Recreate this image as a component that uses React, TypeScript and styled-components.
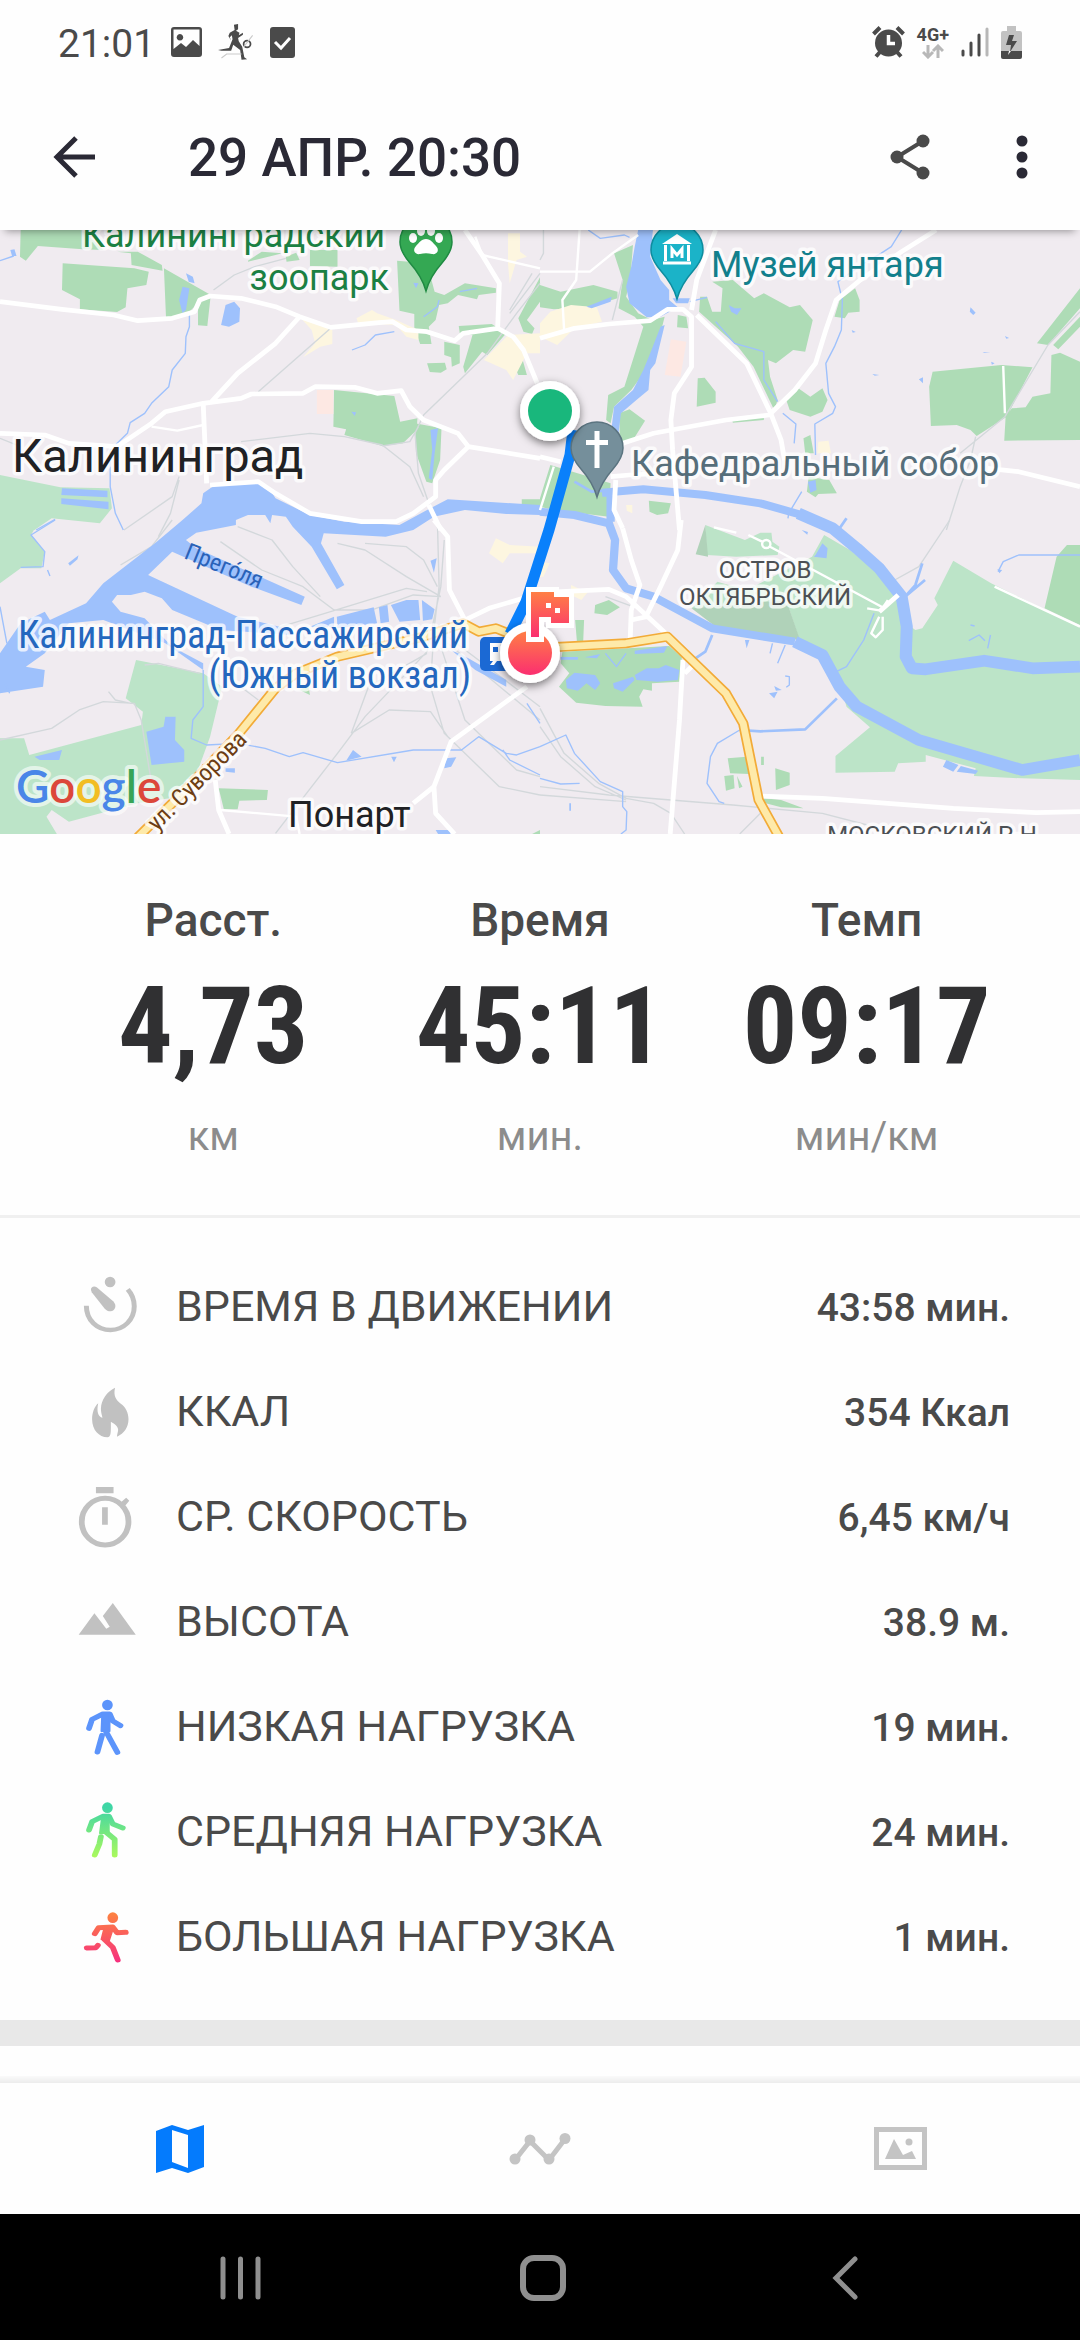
import React from "react";
import styled, { createGlobalStyle } from "styled-components";

const Global = createGlobalStyle`
  *, *::before, *::after { box-sizing: border-box; }
  body { margin: 0; background: #fff; font-family: Roboto, "Noto Sans", sans-serif; }
  button { border: 0; padding: 0; background: none; font: inherit; color: inherit; cursor: pointer; }
  svg { display: block; }
  dl, dd, dt, h1 { margin: 0; }
`;

const Screen = styled.div`
  display: flex;
  flex-direction: column;
  min-height: 100vh;
  background: #fefefe;
`;

/* ---------- status bar ---------- */

const StatusBar = styled.div`
  display: flex;
  align-items: center;
  justify-content: space-between;
  height: 84px;
  padding: 0 58px;
  color: #4a4a4a;
`;

const StatusGroup = styled.div<{ $gap: number }>`
  display: flex;
  align-items: center;
  gap: ${(p) => p.$gap}px;
`;

const Clock = styled.span`
  font-size: 39px;
  line-height: 48px;
  padding-top: 3px;
`;

const Network = styled.span`
  display: flex;
  flex-direction: column;
  align-items: center;
  font-size: 18px;
  font-weight: 700;
  line-height: 18px;
`;

/* ---------- header ---------- */

const Header = styled.header`
  position: relative;
  z-index: 1;
  display: flex;
  align-items: center;
  height: 146px;
  padding: 0 34px;
  background: #fefefe;
  color: #2a2935;
  box-shadow: 0 6px 8px -5px rgba(0, 0, 0, 0.4);
`;

const IconButton = styled.button`
  display: grid;
  place-items: center;
  width: 80px;
  height: 80px;
`;

const Title = styled.h1`
  flex: 1;
  padding: 2px 0 0 74px;
  font-size: 53px;
  line-height: 64px;
  font-weight: 500;
`;

const Actions = styled.div`
  display: flex;
  gap: 32px;
  margin-right: -16px;
`;

/* ---------- map ---------- */

const MapArea = styled.section`
  aspect-ratio: 1080 / 604;
  overflow: hidden;
  background: #f0ebf0;

  svg {
    width: 100%;
    height: 100%;
  }
`;

const MapLabel = styled.text<{ $size: number; $narrow?: boolean }>`
  font-family: ${(p) => (p.$narrow ? '"Roboto Condensed", ' : "")}Roboto, "Noto Sans", sans-serif;
  font-size: ${(p) => p.$size}px;
  stroke: rgba(255, 255, 255, 0.75);
  stroke-width: 7px;
  stroke-linejoin: round;
  paint-order: stroke;
`;

const Wordmark = styled.text`
  font-family: Lato, sans-serif;
  font-size: 46px;
  font-weight: 600;
  stroke: rgba(255, 255, 255, 0.6);
  stroke-width: 8px;
  stroke-linejoin: round;
  paint-order: stroke;
`;

/* ---------- summary ---------- */

const Summary = styled.dl`
  display: grid;
  grid-template-columns: repeat(3, 1fr);
  padding: 58px 50px 50px;
  border-bottom: 3px solid #f0f0f0;
  text-align: center;
`;

const Stat = styled.div`
  display: flex;
  flex-direction: column;
`;

const StatLabel = styled.dt`
  font-size: 46px;
  line-height: 56px;
  font-weight: 500;
  color: #4a4a4a;
`;

const StatValue = styled.dd`
  margin: 23px 0 28px;
  font-family: "Roboto Condensed", "Liberation Sans Narrow", Roboto, sans-serif;
  font-size: 108px;
  line-height: 110px;
  font-weight: 700;
  color: #303032;
`;

const StatUnit = styled.dd`
  font-size: 40px;
  line-height: 56px;
  color: #8c8c8c;
`;

/* ---------- details ---------- */

const Details = styled.dl`
  padding: 35px 70px 32px 76px;
  border-bottom: 26px solid #e8e8e8;
`;

const Row = styled.div`
  display: flex;
  align-items: center;
  height: 105px;
  color: #4a4a4a;
`;

const RowIcon = styled.svg`
  width: 64px;
  height: 72px;
  fill: #c1c1c1;
`;

const RowLabel = styled.dt`
  flex: 1;
  padding-left: 36px;
  font-size: 43px;
  line-height: 50px;
`;

const RowValue = styled.dd`
  padding-top: 4px;
  font-size: 39px;
  line-height: 50px;
  font-weight: 500;
`;

/* ---------- bottom bars ---------- */

const Filler = styled.div`
  flex: 1;
  min-height: 30px;
`;

const Tabs = styled.nav`
  display: grid;
  grid-template-columns: repeat(3, 1fr);
  height: 138px;
  padding-top: 7px;
  background: linear-gradient(#fafafa, #ececec 7px, #fefefe 7px);
`;

const Tab = styled.button`
  display: grid;
  place-items: center;
`;

const SystemBar = styled.nav`
  display: grid;
  grid-template-columns: repeat(3, 1fr);
  height: 126px;
  padding: 2px 84px 0 90px;
  background: #000;
`;

/* ---------- map data: one path per quarter sheet (NW, NE, SW, SE) ---------- */

type Sheets = [string, string, string, string];

const sheetOrigin = ["0 0", "1568 0", "0 900", "1568 900"];

const lightPark: Sheets = [
  "M0 765L175 802L318 805L325 865L290 910L150 895L100 930H0Z",
  "",
  "M0 0H115L90 45L130 95L120 145L60 145L0 190Z M0 655L70 655L85 705L410 615L415 575L365 535L395 420L590 460L645 500L610 650L575 750L520 830L400 850L200 905L150 870L135 890L165 942H0Z",
  "M825 45L900 90L1035 200L1050 300L1090 330L1110 325L1155 255L1145 235L1200 122L1310 190L1568 320V780L1400 775L1260 768L1265 745L1120 705L1120 725L1040 730L1030 755L858 758L858 708L958 622L890 560L860 450L800 390L755 365L715 240L440 265L515 185L600 210L790 110Z M480 15L595 60L640 38H672L675 65L695 80L690 105L570 110L485 105Z",
];

const park: Sheets = [
  "M60 30H240L300 90L240 88L110 78L75 122L58 110Z M182 130L390 145L432 155L425 195L370 205L365 262L340 276L232 268V238L180 210Z M340 95H400L470 135L472 152L382 135L380 100Z M476 145L612 225L602 318L575 316V250L540 285L482 292Z M720 122L760 95L820 100L720 125Z M830 110L860 98L870 120L832 125Z M900 90H980V140L900 138Z M1153 122L1240 130L1262 215L1290 225L1350 190L1440 205V218L1390 225L1385 238L1330 225L1300 250L1275 255L1265 300L1245 320L1253 372H1220L1203 322V282L1160 272Z M1332 318L1428 312L1470 340L1415 405L1400 395L1350 460L1345 440L1372 345L1335 340Z M1290 365L1335 375V430L1312 440L1310 412L1290 405Z M1240 430L1292 428L1297 448L1280 458L1248 456Z M1568 172L1505 295L1520 335L1545 342L1552 325L1530 300L1568 245Z M1490 430L1515 410L1530 465H1505Z M970 510L1145 528L1162 605L1212 595L1210 630L1170 670L1110 678L1000 645L1005 628L968 620Z M1205 610L1282 625L1278 720L1255 790L1238 785L1208 700Z M1515 838H1568V860H1515Z",
  "M215 100L270 75L262 180L250 230L285 280L325 300L362 290L330 420L265 510L215 560L205 610L192 600L198 525L245 500L300 320L275 290L228 265L240 180Z M0 195L60 215L155 195L225 215V235L140 262L40 268L0 262Z M500 185L560 180L622 235L650 220L725 262L755 255L792 300L770 395L735 390L685 430L662 420L668 470L690 540L680 570L620 440L575 380L462 275L465 230H485L500 275H525L530 205Z M400 285L425 290L430 325L398 322Z M870 240L915 205L928 240V275L895 278L885 295L855 290Z M1568 205L1443 370L1475 375L1568 265Z M1568 290L1490 375L1505 388L1568 320Z M1140 455L1340 435L1430 442L1355 590L1268 648L1250 630L1210 615L1135 618L1130 500Z M1485 405L1510 398L1568 425V660L1348 662L1352 590L1370 565L1410 562L1430 530L1482 520Z M458 475L478 473L510 515V548L455 560Z M715 540L750 505L785 530L820 505L835 540L820 575L785 590L725 570Z M230 580L260 568L305 602L270 660L232 670Z M558 600L650 588V600L560 608Z M765 655L785 645L795 700H770Z M780 770L840 780L862 820L808 822L800 832L775 815Z M30 735L205 790L200 890L40 870L0 860V835Z M316 842L380 850L372 880L340 885L318 875Z",
  "M635 805L778 810L775 840L695 842L690 868H650Z M870 510L895 495L900 525Z M1545 942L1568 930V942Z",
  "M160 255L200 240L232 262L195 285L158 280Z M102 300H128L125 375H108Z M65 395L375 378L412 412L405 485L325 490V512L300 508L288 530L298 560L190 558L105 548L55 500L85 460L60 430Z M1530 75H1568V315L1465 265L1500 110Z M545 715L600 710L608 762L552 760Z M535 768L562 765L565 805L540 812Z M572 768L588 800L578 805Z M683 745L725 758V795L685 810Z M642 710H650V735H642Z M650 835L700 840L765 865L700 862L650 848Z",
];

const shade: Sheets = ["", "", "", "M480 15L488 110L452 103Z M440 265L715 240L755 360L620 345L510 320Z"];

const sand: Sheets = [
  "M1475 40H1510V95L1530 110L1500 120L1480 190L1475 130Z M870 290L910 310L965 330V372L930 380L880 412L915 370L905 330Z M1035 295L1080 270L1095 280L1150 300L1215 330V360L1180 350L1150 315L1040 310Z M1405 420L1475 345L1568 340V400L1530 400L1490 480L1470 450Z",
  "M0 310L30 275L90 255L165 262L180 305L100 325L50 375L0 350Z M808 665L838 662L845 700H805Z M250 855H268V880L252 872Z",
  "M1420 100L1440 55L1480 75L1568 80V100L1480 100L1460 130Z",
  "M0 125L28 130L10 170H0Z M90 195L110 205L140 215L120 240L90 225Z",
];

const clinic: Sheets = ["M920 510H968V582H920Z", "M380 358L425 365L408 470L362 465Z", "", ""];

const water: Sheets = [
  "M520 240L530 200L550 205L540 270L530 280Z M540 160L560 170L565 190L548 185Z M655 255L680 245L697 265L695 305L665 320L642 315Z M180 805L312 812V832L178 825Z M178 835L315 845V868L178 852Z M1250 630L1272 625L1262 700L1255 780L1245 775L1255 690Z M30 90L42 88L48 108H35Z M1200 188L1215 190L1208 205Z M1020 575L1034 577L1030 588Z",
  "M285 30H328L320 110L350 180L375 210V240L400 262L350 290L310 292L260 250L250 200L265 140L275 80Z M385 235H435L430 250H395Z M135 260L208 230L205 245L150 265Z M350 320L362 315L335 430L320 450L315 510L280 540L235 580L228 640L205 650L215 560L270 510L300 450L320 400Z M548 255L565 265H585L572 285L555 275Z M1250 262L1265 278L1258 285L1248 275Z M1100 478L1112 472V490Z M1310 425L1320 430L1312 434Z M1350 348L1362 354L1354 356Z M965 462L985 465L972 467Z M1285 396H1308L1290 398Z M905 330L917 336L908 338Z M778 785L800 780L803 810L785 818Z",
  "M530 0L585-50L590-80L620-102L720-112L775-105L800-65L900-15L1000 5L1160 15L1240-30L1300-62L1568-45V-15L1470-18L1350-30L1260-10L1200 30L1120 50L940 40L932 70L1000 195L978 208L905 80L850 20L830-10L790-15L785 10L770-15H720L685 0V15L570 38L540 60L570 85L885 230L875 255L730 200L500 95L430 165L690 290L850 330V345L640 330L500 270L470 235L420 215L380 225L340 225L325 245L350 275L420 295L500 380L590 430V450L480 370L300 300L200 310L130 400L75 440L130 450L125 500L0 520V400L60 310L130 275L145 300L250 250L300 190L450 70Z M900 320L970 290V322Z M978 290L1085 262L1095 310L980 325Z M1100 262L1125 255L1130 305L1105 310Z M1135 255L1180 240L1215 240L1220 300L1160 305Z M1225 240L1262 268L1255 298L1228 302Z M1250 122L1268 115L1260 158Z M425 635L475 620L480 590H510L508 660L535 690V725L440 735Z M100 710L180 690L172 720L115 720Z M1005 722L1025 690L1050 710Z M1290 745L1295 715L1325 712L1310 740Z M1265 930H1308V942H1272Z M655 745H682V758L655 755Z M198 130L228 106L225 118L203 137Z M1136 710H1152L1144 727Z M1310 390L1360 415L1470 480V500L1380 450Z",
  "M75 480L100 458L160 465L175 490L160 510L135 490L110 512L78 505Z M212 490L270 470L275 480L240 515L215 505Z M275 465L310 445H345L365 435L405 450L400 480L340 485L280 480Z M800 105L820 70L835 85L832 115L795 110Z M1170 740L1180 720L1215 735L1200 755Z M1210 755L1222 738L1272 752L1265 762Z M665 520L690 515L680 535Z M595 360H608L600 385Z M680 498L702 510L685 512Z M760 30L778 36L776 44Z M1328 148L1342 150L1334 160Z M275 392L370 378L360 398L275 402Z M130 412L175 402L165 415Z M85 850H90V872H85Z",
];

const stream: Sheets = [
  "M0 122L40 108 M550 285V320L540 350L538 400L500 450L490 500L440 550L420 580L378 608L370 640L320 690V800L335 880L358 930 M1022 390L1060 375L1090 345L1145 335 M1230 290L1270 260L1275 240 M105 930L160 898 M1335 215L1385 205",
  "M140 30L175 55L245 45L260 52 M1050 30L1020 80L990 100L940 130L865 185L878 240L875 330L855 380L830 430L838 520L858 560L850 580L798 612L800 705 M510 305L565 370L650 395V480L690 545 M705 580L743 612L738 670 M760 815L722 880L720 895 M435 245L485 232",
  "M590 450V560L560 600L555 655L600 675L690 670L770 685L840 710L880 698L980 728L1200 690L1340 690L1390 650L1470 700L1500 705L1568 680 M1460 690L1480 720L1568 765 M160 0L90 45L130 95L125 140L60 142 M0 260L20 370 M15 490L28 520 M138 150L145 168 M1530 550L1568 610",
  "M0 680L75 645L100 700L175 785L240 815V860L252 875L250 930L235 942 M0 775L60 792L115 790 M970 280L940 360L890 440L860 455 M1330 155L1345 125L1390 105L1568 105 M580 630L515 670L495 710L485 790L520 845L535 850 M190 400L222 440L250 400 M712 375L690 430 M675 370L668 400 M712 468L724 470V495L715 502 M1245 362L1275 345L1292 362 M1250 315L1262 318 M1308 345L1300 385",
];

const creek: Sheets = [
  "",
  "M100 785L150 815L190 812 M890 895L870 925",
  "",
  "M500 345L480 395L430 430 M862 535L770 628L640 634L580 630 M1110 130L1090 195L1060 230L1118 180 M60 415L110 415",
];

const riverWide: Sheets = [
  "",
  "M750 880L850 925L920 985L985 1045L1050 1130L1065 1220L1062 1310L1080 1345L1120 1348L1290 1322L1430 1345L1568 1340 M740 1265L820 1305L870 1400L920 1460L1100 1560L1400 1650L1568 1620",
  "",
  "",
];

const riverNarrow: Sheets = [
  "",
  "M180 818L300 808L480 825L640 850L770 888 M0 875L100 885L200 910L218 960L212 1050L250 1105L330 1130L500 1225L740 1265 M205 815V905",
  "",
  "",
];

const rail: Sheets = [
  "M750 515L960 325 M620 210L680 165L740 140L830 115 M1568 160L1480 280 M1545 160L1480 270 M1568 190L1500 280L1415 400L1345 470L1230 585L1205 640L1215 760L1245 850 M700 665L900 640L1000 650L1110 675L1190 740L1230 830 M1215 620L1190 665L1110 678 M520 770L500 830L360 930 M520 780L495 880L460 950 M0 655L60 680",
  "M240 180L210 300 M0 120L10 100V30 M1568 275L1475 375L1350 590L1220 700 M1265 650L1250 720L1220 800L1180 930",
  "M0 660L150 625L230 570L300 545L390 550L410 600L440 790 M350 135L440 80L500 0 M800 940L980 700L1060 590L1240 395L1280 200L1290 60 M640 65L760 150L880 200L970 270L1080 270L1200 225L1280 230 M690 20L790 60L850 140L930 230 M980 70L1060 90L1180 170L1280 230 M1060 70L1180 80L1230 120L1270 200 M800 325L960 275L1180 205L1240 215 M1270 0L1275 200L1260 330L1250 500L1290 640L1450 800L1568 825 M1020 640L1130 570L1250 575L1300 650 M1280 380L1350 600L1430 680L1500 750L1568 770 M1300 350L1568 560 M1300 370L1568 600 M1240 400L1070 500L1020 640 M420 435L460 430L580 460 M660 470L750 540 M315 515L335 540L380 550",
  "M1190 0L1100 140L1030 180 M190 230L270 260 M0 565L70 700L170 790L250 835L330 850L380 880L420 942 M0 800L200 825L560 855L820 880L950 915 M580 942L640 880 M0 825L250 845 M0 620L60 710L160 800L250 840",
];

const road: Sheets = [
  "M0 245L180 268L330 285L400 302L500 295L565 275L580 240L610 228L700 235L800 260L870 290L960 322L1100 308L1140 305L1180 330L1240 335L1320 362L1345 340L1445 325L1490 350L1520 390L1560 490 M870 290L800 370L690 460L610 550 M0 640L130 645L200 670L340 680L440 610L480 575L590 550L700 535L730 522L880 520L915 500L1030 502L1095 520L1165 512L1190 560L1230 600L1330 640L1360 680L1290 750L1265 780V830L1200 880L1150 905L1050 905L900 880L800 820L750 785L610 795 M590 550L600 790 M1360 680L1568 715 M1350 30L1400 105L1450 190L1445 325 M1245 855L1280 930",
  "M0 355L100 325L200 312L320 302L370 268L415 268L440 290V440L390 520L380 600L385 690L405 930 M455 285L600 430L670 580L700 660L710 720 M440 270L455 180L510 30 M1150 30L1050 95L930 180L860 240L830 330L800 430L740 510L665 585L540 600L330 640L240 670L200 760 M0 710L60 725 M205 770L260 765L390 758 M1300 745L1390 755L1568 800 M220 780L215 870L240 925",
  "M1260 0L1300 50L1305 210L1350 300L1420 265L1568 220 M1530 500L1310 665L1260 800L1200 850 M1260 800L1265 880L1320 942 M625 780L635 870L665 942",
  "M240 25L265 120L290 195L265 270L262 355 M410 0L400 90L350 200L310 285 M0 218L200 208L250 230L370 345 M265 300L310 290 M415 420L405 600L378 942 M420 460L445 435 M640 828L820 835L1200 865L1440 878L1568 875 M1040 225L985 275",
];

const lane: Sheets = [
  "M440 620L515 632L590 615 M1400 105L1568 145 M1400 105L1380 50",
  "M115 30L105 180L65 240L70 330 M0 155L145 155L210 100L285 45 M1345 438L1350 580 M0 870L40 740",
  "M640 870L860 890L870 942",
  "M505 22L570 38 M605 45L645 65 M668 80L1000 265 M645 72A12 12 0 1 0 669 72A12 12 0 1 0 645 72 M950 265L990 272L1010 240 M985 290L962 340L975 352L995 330V290 M1320 200L1568 320",
];

const highway: Sheets = [
  "",
  "",
  "M400 952L500 850L690 645L800 505L860 460L980 410L1230 350L1345 310L1390 335L1440 325L1500 350",
  "M-20 385L250 370L370 350L540 520L590 610L635 840L695 952",
];

function Sheet({ paths, fill, stroke, width }: { paths: Sheets; fill?: string; stroke?: string; width?: number }) {
  return (
    <g fill={fill ?? "none"} stroke={stroke} strokeWidth={width} strokeLinejoin="round">
      {paths.map((d, i) => (d ? <path key={i} d={d} transform={`translate(${sheetOrigin[i]})`} /> : null))}
    </g>
  );
}

const pinShape = "M0 49C-3 38-8 30-16 21C-22 14-26 8-26 0A26 26 0 1 1 26 0C26 8 22 14 16 21C8 30 3 38 0 49Z";

function RouteMap() {
  return (
    <svg viewBox="0 0 1080 604" preserveAspectRatio="xMidYMid slice" role="img" aria-label="Карта маршрута">
      <defs>
        <linearGradient id="finish" x1="0" y1="0" x2="0" y2="1">
          <stop offset="0" stopColor="#ff7f45" />
          <stop offset="1" stopColor="#fb2f70" />
        </linearGradient>
        <filter id="drop" x="-40%" y="-40%" width="180%" height="180%">
          <feDropShadow dx="0" dy="3" stdDeviation="4" floodColor="#000" floodOpacity="0.5" />
        </filter>
      </defs>

      <g transform="translate(0 -10) scale(0.34439 0.33333)">
        <Sheet paths={lightPark} fill="#bce4c8" />
        <Sheet paths={park} fill="#aedcb6" />
        <Sheet paths={shade} fill="#b0d2b9" />
        <Sheet paths={sand} fill="#fdf6e0" />
        <Sheet paths={clinic} fill="#fde8e3" />
        <Sheet paths={rail} stroke="#d3d8db" width={4} />
        <Sheet paths={water} fill="#9ec1fc" />
        <Sheet paths={stream} stroke="#9ec1fc" width={4} />
        <Sheet paths={creek} stroke="#9ec1fc" width={8} />
        <Sheet paths={riverNarrow} stroke="#9ec1fc" width={24} />
        <Sheet paths={riverWide} stroke="#9ec1fc" width={35} />
        <Sheet paths={lane} stroke="#fff" width={7} />
        <Sheet paths={road} stroke="#fff" width={14} />
        <Sheet paths={highway} stroke="#f2ab38" width={30} />
        <Sheet paths={highway} stroke="#feeaa9" width={20} />
      </g>

      <MapLabel $size={36} x="385" y="17" textAnchor="end" fill="#1b8043">Калининградский</MapLabel>
      <MapLabel $size={36} x="389" y="60" textAnchor="end" fill="#1b8043">зоопарк</MapLabel>
      <MapLabel $size={36} x="711" y="47" fill="#12808c">Музей янтаря</MapLabel>
      <MapLabel $size={36} x="631" y="246" fill="#566e7a">Кафедральный собор</MapLabel>
      <MapLabel $size={47} x="12" y="242" fill="#202124">Калининград</MapLabel>
      <MapLabel $size={24} $narrow fill="#2a62b8" transform="translate(183 328) rotate(22)" style={{ strokeWidth: 0 }}>
        Прего́ля
      </MapLabel>
      <MapLabel $size={38} $narrow x="468" y="418" textAnchor="end" fill="#2467be">Калининград-Пассажирский</MapLabel>
      <MapLabel $size={38} $narrow x="471" y="458" textAnchor="end" fill="#2467be">(Южный вокзал)</MapLabel>
      <MapLabel $size={24} x="765" y="348" textAnchor="middle" fill="#4c5054">ОСТРОВ</MapLabel>
      <MapLabel $size={24} x="765" y="375" textAnchor="middle" fill="#4c5054">ОКТЯБРЬСКИЙ</MapLabel>
      <MapLabel $size={24} x="932" y="613" textAnchor="middle" fill="#4c5054">МОСКОВСКИЙ Р-Н</MapLabel>
      <MapLabel $size={36} x="288" y="597" fill="#202124">Понарт</MapLabel>
      <MapLabel $size={24} $narrow fill="#6c3d14" transform="translate(157 602) rotate(-45)">ул. Суворова</MapLabel>
      <Wordmark x="16" y="573">
        <tspan fill="#4a86e8">G</tspan>
        <tspan fill="#dc473b">o</tspan>
        <tspan fill="#f2bd22">o</tspan>
        <tspan fill="#4a86e8">g</tspan>
        <tspan fill="#38a457">l</tspan>
        <tspan fill="#dc473b">e</tspan>
      </Wordmark>

      <g transform="translate(426 12)">
        <path d={pinShape} fill="#34a853" stroke="#1f8a42" strokeWidth="1.5" />
        <g fill="#fff">
          <path d="M0-3C-5-3-7 1-10 4C-14 8-11 13-6 12C-2 11 2 11 6 12C11 13 14 8 10 4C7 1 5-3 0-3Z" />
          <ellipse cx="-13" cy="-4" rx="4" ry="5" />
          <ellipse cx="13" cy="-4" rx="4" ry="5" />
          <ellipse cx="-5" cy="-11" rx="4" ry="5" />
          <ellipse cx="5" cy="-11" rx="4" ry="5" />
        </g>
      </g>

      <g transform="translate(677 20)">
        <path d={pinShape} fill="#1bb3c8" stroke="#0d8d9f" strokeWidth="1.5" />
        <g fill="none" stroke="#fff" strokeWidth="3">
          <path d="M-15-6L0-16L15-6Z" fill="#fff" strokeWidth="0" />
          <path d="M-11.500-5V11 M11.500-5V11 M-14 13H14" />
          <path d="M-5 8V-1L0 5L5-1V8" />
        </g>
      </g>

      <path d="M573 200L570 225L549 300L526 372L510 404" fill="none" stroke="#0a80fb" strokeWidth="11" />

      <g transform="translate(597 218)">
        <path d={pinShape} fill="#758f9b" stroke="#5b7480" strokeWidth="1.500" />
        <path d="M-2.500-17H2.500V-8H11V-3H2.500V20H-2.500V-3H-11V-8H-2.500Z" fill="#fff" />
      </g>

      <circle cx="550" cy="181" r="30" fill="#fff" filter="url(#drop)" />
      <circle cx="550" cy="181" r="22" fill="#19b77c" />

      <rect x="480" y="407" width="34" height="34" rx="5" fill="#1b69d4" />
      <path
        d="M490 413H508V431H505L508 435H504L501 431H497L494 435H490L493 431H490Z M493 417V422H498V417Z M501 417V422H506V417Z"
        fill="#fff"
        fillRule="evenodd"
      />
      <circle cx="530" cy="423" r="30" fill="#fff" filter="url(#drop)" />
      <circle cx="530" cy="423" r="22" fill="url(#finish)" />
      <path
        d="M531 362H554V367H569V393H551V387H539V407H531Z"
        fill="url(#finish)"
        stroke="#fff"
        strokeWidth="10"
        paintOrder="stroke"
      />
      <path d="M546 373H551V378H546Z M555 378H560V383H555Z" fill="#fff" />
    </svg>
  );
}

/* ---------- data ---------- */

const summary = [
  { label: "Расст.", value: "4,73", unit: "км" },
  { label: "Время", value: "45:11", unit: "мин." },
  { label: "Темп", value: "09:17", unit: "мин/км" },
];

const details: { label: string; value: string; box: string; icon: React.ReactNode }[] = [
  {
    label: "ВРЕМЯ В ДВИЖЕНИИ",
    value: "43:58 мин.",
    box: "42 58 167 216",
    icon: (
      <>
        <ellipse cx="131" cy="94" rx="14" ry="16" />
        <path d="M81 118C80 108 90 105 96 110L139 152C150 165 144 181 132 182C126 182 121 179 117 174L83 125Z" />
        <path d="M69 165C69 208 97 238 132 238C167 238 194 207 194 167C194 148 188 130 177 116" fill="none" stroke="#c1c1c1" strokeWidth="13" />
      </>
    ),
  },
  {
    label: "ККАЛ",
    value: "354 Ккал",
    box: "42 373 167 216",
    icon: (
      <path d="M144 411C122 424 108 446 107 474C107 484 109 490 111 501C100 500 95 482 100 458C90 468 84 486 84 506C84 538 102 560 124 560C134 558 133 546 133 513C144 520 152 528 152 538C151 546 149 552 149 558C168 550 179 528 179 506C179 486 171 468 159 459C146 447 139 434 144 411Z" />
    ),
  },
  {
    label: "СР. СКОРОСТЬ",
    value: "6,45 км/ч",
    box: "42 688 167 216",
    icon: (
      <>
        <path d="M94 709H140V728H94Z M110 770H125V822H110Z M160 754L173 741L181 750L169 767Z" />
        <ellipse cx="118" cy="813" rx="61" ry="70" fill="none" stroke="#c1c1c1" strokeWidth="15" />
      </>
    ),
  },
  {
    label: "ВЫСОТА",
    value: "38.9 м.",
    box: "42 1003 167 216",
    icon: <path d="M49 1152L90 1088L121 1134L130 1128L112 1096L138 1057L198 1152Z" />,
  },
  {
    label: "НИЗКАЯ НАГРУЗКА",
    value: "19 мин.",
    box: "42 148 167 216",
    icon: (
      <g fill="none" stroke="#5c94fb" strokeWidth="15" strokeLinecap="round" strokeLinejoin="round">
        <ellipse cx="124" cy="193" rx="14" ry="16" fill="#5c94fb" stroke="none" />
        <path d="M76 263L84 236L112 220L130 220L138 241L158 255" />
        <path d="M118 225V268L150 335 M110 284L98 334" />
        <path d="M110 218H130V272H108Z" fill="#5c94fb" strokeWidth="4" />
      </g>
    ),
  },
  {
    label: "СРЕДНЯЯ НАГРУЗКА",
    value: "24 мин.",
    box: "42 463 167 216",
    icon: (
      <g fill="none" stroke="url(#medium)" strokeWidth="15" strokeLinecap="round" strokeLinejoin="round">
        <linearGradient id="medium" gradientUnits="userSpaceOnUse" x1="0" y1="485" x2="0" y2="650">
          <stop offset="0.100" stopColor="#3fd6a5" />
          <stop offset="1" stopColor="#abf95c" />
        </linearGradient>
        <ellipse cx="124" cy="501" rx="14" ry="16" fill="url(#medium)" stroke="none" />
        <path d="M76 568L84 543L112 527L128 527L138 550L164 562" />
        <path d="M118 532V572L143 596V643 M107 588L103 610L91 643" />
        <path d="M110 526H128V578H104Z" fill="url(#medium)" strokeWidth="4" />
      </g>
    ),
  },
  {
    label: "БОЛЬШАЯ НАГРУЗКА",
    value: "1 мин.",
    box: "42 778 167 216",
    icon: (
      <g fill="none" stroke="url(#hard)" strokeWidth="15" strokeLinecap="round" strokeLinejoin="round">
        <linearGradient id="hard" gradientUnits="userSpaceOnUse" x1="0" y1="815" x2="0" y2="965">
          <stop offset="0" stopColor="#fd8340" />
          <stop offset="1" stopColor="#f6307f" />
        </linearGradient>
        <ellipse cx="138" cy="831" rx="14" ry="16" fill="url(#hard)" stroke="none" />
        <path d="M91 879L101 861L138 859L149 876L172 875" />
        <path d="M128 866L116 896L138 920L151 958 M99 914L94 921L70 922" />
        <path d="M116 860H140L128 902L108 896Z" fill="url(#hard)" strokeWidth="4" />
      </g>
    ),
  },
];

export default function App() {
  return (
    <Screen>
      <Global />

      <StatusBar>
        <StatusGroup $gap={16}>
          <Clock>21:01</Clock>
          <svg width="31" height="30" viewBox="0 0 31 30">
            <path
              fillRule="evenodd"
              fill="#4a4a4a"
              d="M3 0H28A3 3 0 0 1 31 3V27A3 3 0 0 1 28 30H3A3 3 0 0 1 0 27V3A3 3 0 0 1 3 0Z M2.500 2.500V22L10 16L15 20L22 13L28.500 19V2.500Z M9 7A3.300 3.300 0 1 1 8.900 7Z"
            />
          </svg>
          <svg width="36" height="36" viewBox="630 72 104 108" preserveAspectRatio="none" fill="#4a4a4a">
            <path d="M676 74L688 72V88L682 92L692 98L690 106L702 98V104L688 114L690 124L700 140L706 172L714 178L698 179L694 150L674 134L668 152L640 152L630 150L662 144L672 118L670 106L664 112L668 122L660 108L664 98L678 90Z" />
            <circle cx="714" cy="132" r="10" fill="none" stroke="#4a4a4a" strokeWidth="5" />
            <path d="M705 140L730 106 M640 174L655 162L698 162" fill="none" stroke="#c9c9c9" strokeWidth="3" />
          </svg>
          <svg width="25" height="31" viewBox="0 0 25 31">
            <rect width="25" height="31" rx="3" fill="#4a4a4a" />
            <path d="M5 15L11 21L20 11" fill="none" stroke="#fff" strokeWidth="3" />
          </svg>
        </StatusGroup>
        <StatusGroup $gap={12}>
          <svg width="33" height="32" viewBox="0 0 33 32">
            <circle cx="16.500" cy="17" r="13.500" fill="#4a4a4a" />
            <path d="M1.500 8L8 1.500 M31.500 8L25 1.500 M8 26L4 30.500 M25 26L29 30.500" stroke="#4a4a4a" strokeWidth="4" />
            <path d="M16.500 9V17.500H23" fill="none" stroke="#fff" strokeWidth="3.500" />
          </svg>
          <Network>
            4G+
            <svg width="22" height="15" viewBox="0 0 22 15" fill="none" stroke="#b8b8b8" strokeWidth="3">
              <path d="M6 1V12 M1 8L6 13L11 8 M16 14V3 M11 7L16 2L21 7" />
            </svg>
          </Network>
          <svg width="28" height="30" viewBox="0 0 28 30" strokeWidth="3" strokeLinecap="round" stroke="#4a4a4a">
            <path d="M2 24V28 M10 16V28 M18 8V28" />
            <path d="M26 2V28" stroke="#b8b8b8" />
          </svg>
          <svg width="21" height="33" viewBox="0 0 21 33">
            <path d="M6 0H15V5H19A2 2 0 0 1 21 7V25H0V7A2 2 0 0 1 2 5H6Z" fill="#c2c2c2" />
            <path d="M0 25H21V31A2 2 0 0 1 19 33H2A2 2 0 0 1 0 31Z" fill="#4a4a4a" />
            <path d="M8 9H13L11 15H16L9 26L10 19H5Z" fill="#4a4a4a" />
            <path d="M8 25H10L7 29Z" fill="#fff" />
          </svg>
        </StatusGroup>
      </StatusBar>

      <Header>
        <IconButton aria-label="Назад">
          <svg width="42" height="42" viewBox="0 0 42 42" fill="none" stroke="#2a2935" strokeWidth="5">
            <path d="M42 21H4 M23 2L4 21L23 40" />
          </svg>
        </IconButton>
        <Title>29 АПР. 20:30</Title>
        <Actions>
          <IconButton aria-label="Поделиться">
            <svg width="40" height="46" viewBox="0 0 40 46" fill="#4a4a4a">
              <path d="M33 7L7 23L33 39" fill="none" stroke="#4a4a4a" strokeWidth="4" />
              <circle cx="33" cy="7" r="6.500" />
              <circle cx="7" cy="23" r="6.500" />
              <circle cx="33" cy="39" r="6.500" />
            </svg>
          </IconButton>
          <IconButton aria-label="Ещё">
            <svg width="12" height="44" viewBox="0 0 12 44" fill="#2a2935">
              <circle cx="6" cy="6" r="5.500" />
              <circle cx="6" cy="22" r="5.500" />
              <circle cx="6" cy="38" r="5.500" />
            </svg>
          </IconButton>
        </Actions>
      </Header>

      <MapArea>
        <RouteMap />
      </MapArea>

      <Summary>
        {summary.map((s) => (
          <Stat key={s.label}>
            <StatLabel>{s.label}</StatLabel>
            <StatValue>{s.value}</StatValue>
            <StatUnit>{s.unit}</StatUnit>
          </Stat>
        ))}
      </Summary>

      <Details>
        {details.map((d) => (
          <Row key={d.label}>
            <RowIcon viewBox={d.box} preserveAspectRatio="none" aria-hidden="true">
              {d.icon}
            </RowIcon>
            <RowLabel>{d.label}</RowLabel>
            <RowValue>{d.value}</RowValue>
          </Row>
        ))}
      </Details>

      <Filler />

      <Tabs>
        <Tab aria-label="Карта" aria-current="page">
          <svg width="48" height="48" viewBox="0 0 48 48">
            <path
              fill="#047bfd"
              fillRule="evenodd"
              d="M0 6L16 0L32 5L48 0V42L32 48L16 43L0 48Z M16 5V37L32 43V10Z"
            />
          </svg>
        </Tab>
        <Tab aria-label="Графики">
          <svg width="62" height="32" viewBox="0 0 62 32" fill="#c4c4c4">
            <path d="M6 27L21 8L40 27L56 6" fill="none" stroke="#c4c4c4" strokeWidth="5" />
            <circle cx="6" cy="26" r="5.500" />
            <circle cx="21" cy="7" r="5.500" />
            <circle cx="40" cy="26" r="5.500" />
            <circle cx="56" cy="5.500" r="5.500" />
          </svg>
        </Tab>
        <Tab aria-label="Фото">
          <svg width="53" height="43" viewBox="0 0 53 43" fill="#c4c4c4">
            <rect x="2.500" y="2.500" width="48" height="38" fill="none" stroke="#c4c4c4" strokeWidth="5" />
            <path d="M11 32L20 12L29 28L38 24L42 32Z" />
            <circle cx="35" cy="15" r="3.500" />
          </svg>
        </Tab>
      </Tabs>

      <SystemBar>
        <Tab aria-label="Недавние">
          <svg width="42" height="44" viewBox="0 0 42 44" stroke="#8f8f8f" strokeWidth="5" strokeLinecap="round">
            <path d="M3 3V41 M20.500 3V41 M38 3V41" />
          </svg>
        </Tab>
        <Tab aria-label="Домой">
          <svg width="46" height="46" viewBox="0 0 46 46" fill="none" stroke="#8f8f8f" strokeWidth="6">
            <rect x="3" y="3" width="40" height="40" rx="11" />
          </svg>
        </Tab>
        <Tab aria-label="Назад">
          <svg width="26" height="44" viewBox="0 0 26 44" fill="none" stroke="#8f8f8f" strokeWidth="5" strokeLinecap="round">
            <path d="M23 3L4 22L23 41" />
          </svg>
        </Tab>
      </SystemBar>
    </Screen>
  );
}
